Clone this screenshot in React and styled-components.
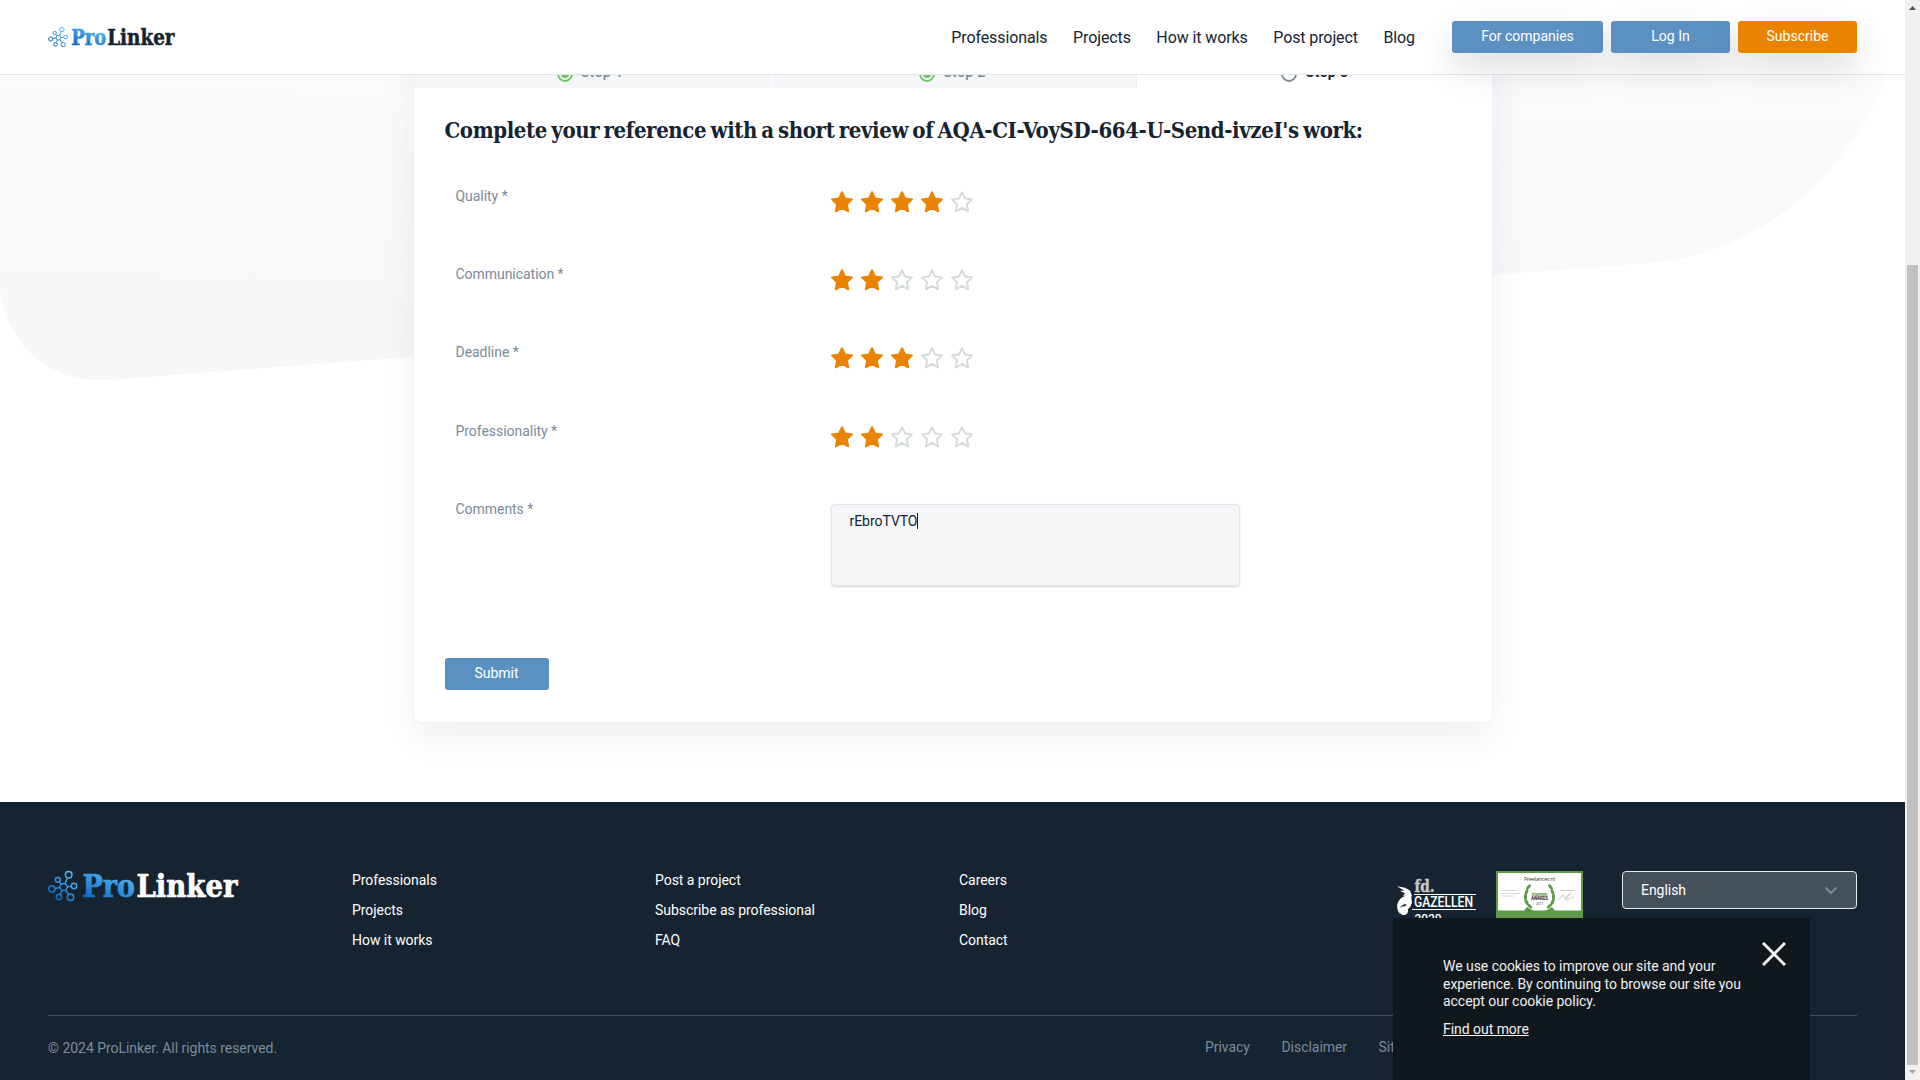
import React from 'react';
import styled, { createGlobalStyle } from 'styled-components';

const Global = createGlobalStyle`
  * { box-sizing: border-box; }
  html, body { margin: 0; height: 1080px; overflow: hidden; background: #fff; }
  body { font-family: Roboto, "Liberation Sans", sans-serif; font-size: 14px; letter-spacing: -0.04px; color: #152430; }
`;

const Window = styled.div`
  display: flex;
  width: 1920px;
  height: 1080px;
  overflow: hidden;
`;

const Page = styled.div`
  position: relative;
  width: 1905px;
  height: 1080px;
  display: flex;
  flex-direction: column;
  overflow: hidden;
`;

const Backdrop = styled.svg`
  position: absolute;
  left: 0;
  top: 0;
`;

const Header = styled.header`
  position: relative;
  z-index: 3;
  flex: none;
  height: 75px;
  padding: 0 48px;
  display: flex;
  align-items: center;
  background: #fff;
  border-bottom: 1px solid #e2e6ea;
`;

const Nav = styled.nav`
  display: flex;
  gap: 25.5px;
  margin-left: auto;
  margin-right: 37px;
  padding-top: 1px;
`;

const NavLink = styled.a`
  font-size: 16px;
  line-height: 24px;
  letter-spacing: -0.1px;
  white-space: nowrap;
`;

const Actions = styled.div`
  display: flex;
  gap: 8px;
`;

const Button = styled.button`
  width: ${(p) => p.$width}px;
  height: 32px;
  padding: 0 0 2px;
  border: 0;
  border-radius: 3px;
  font: inherit;
  color: #fff;
  background: ${(p) => (p.$accent ? '#e98300' : '#5b91c2')};
  box-shadow: ${(p) => (p.$raised ? '0 15px 35px rgba(0, 0, 0, 0.14)' : 'none')};
`;

const Main = styled.main`
  position: relative;
  flex: none;
  height: 774px;
  margin-top: -47px;
  display: flex;
  flex-direction: column;
  align-items: center;
`;

const Card = styled.section`
  width: 1080px;
  height: 695px;
  display: flex;
  flex-direction: column;
  background: #fff;
  border: 1px solid #f0effb;
  border-top: 0;
  border-radius: 0 0 8px 8px;
  box-shadow: 0 15px 35px rgba(0, 0, 0, 0.06);
`;

const Tabs = styled.div`
  flex: none;
  height: 60px;
  margin: 0 -1px;
  display: grid;
  grid-template-columns: 356px 5px 363px 1fr;
`;

const Tab = styled.div`
  display: flex;
  align-items: flex-end;
  justify-content: center;
  gap: 8px;
  padding: 0 ${(p) => p.$shift || 0}px 6px ${(p) => (p.$active ? 2 : 0)}px;
  line-height: 16px;
  letter-spacing: 0.45px;
  font-weight: ${(p) => (p.$active ? 700 : 500)};
  color: ${(p) => (p.$active ? '#152430' : '#7b8b99')};
  background: ${(p) => (p.$active ? '#fff' : '#f5f6f8')};
  border-right: 1px solid #f0effb;
`;

const TabLabel = styled.span`
  margin-bottom: 2px;
`;

const TabGap = styled.div`
  background: #f8f9fa;
`;

const StepIcon = styled.svg`
  flex: none;
  width: 16px;
  height: 16px;
`;

const Body = styled.div`
  padding: 30px 31px 0;
`;

const Title = styled.h1`
  margin: 0 0 44px;
  font-family: "Roboto Slab", "DejaVu Serif Condensed", "DejaVu Serif", serif;
  font-stretch: condensed;
  font-size: 22px;
  font-weight: 700;
  line-height: 24px;
  letter-spacing: -0.39px;
  word-spacing: -2.2px;
  white-space: nowrap;
`;

const Row = styled.div`
  display: grid;
  grid-template-columns: 375px 1fr;
  height: ${(p) => p.$height}px;
  padding-left: 11px;
`;

const Label = styled.label`
  line-height: 20px;
  color: #7b8b99;
`;

const Stars = styled.div`
  display: flex;
  gap: 8px;
  padding-top: 5px;
`;

const Star = styled.svg`
  width: 22px;
  height: 22px;
`;

const Comment = styled.div`
  width: 409px;
  height: 82px;
  margin-top: 5px;
  padding: 6px 18px;
  display: flex;
  line-height: 20px;
  background: #f5f7f9;
  border: 1px solid #e2e6ea;
  border-radius: 4px;
  box-shadow: 0 1px 2px rgba(0, 0, 0, 0.15);
`;

const Caret = styled.span`
  width: 1px;
  height: 16px;
  margin-top: 2px;
  background: #152430;
`;

const SubmitRow = styled.div`
  margin-top: 56px;
`;

const Footer = styled.footer`
  flex: none;
  height: 278px;
  padding: 69px 48px 0;
  color: #fff;
  background: #152430;
`;

const FooterTop = styled.div`
  display: grid;
  grid-template-columns: 304px 303px 304px 437px 100px 126px 235px;
  height: 145px;
  border-bottom: 1px solid #41505f;
`;

const LinkList = styled.div`
  display: flex;
  flex-direction: column;
  gap: 14px;
  padding-top: 1px;
`;

const FooterLink = styled.a`
  line-height: 16px;
`;

const Language = styled.div`
  display: flex;
  align-items: center;
  justify-content: space-between;
  height: 38px;
  padding: 0 18px;
  background: #44505a;
  border: 1px solid #e6e8ea;
  border-radius: 4px;
`;

const Legal = styled.div`
  display: flex;
  padding-top: 23px;
  line-height: 16px;
  color: #7b8b99;
`;

const Copyright = styled.span`
  width: 1157px;
  padding-top: 1px;
`;

const LegalLink = styled.a`
  margin-right: 31.5px;
`;

const Cookie = styled.aside`
  position: absolute;
  z-index: 4;
  right: 95px;
  bottom: 0;
  width: 417px;
  height: 162px;
  padding: 40px 50px;
  line-height: 17.5px;
  color: #f1f1f1;
  background: #10171d;
`;

const CookieText = styled.p`
  margin: 0 0 10px;
  white-space: nowrap;
`;

const CookieLink = styled.a`
  text-decoration: underline;
`;

const Close = styled.svg`
  position: absolute;
  right: 24px;
  top: 24px;
`;

const Scrollbar = styled.div`
  width: 15px;
  height: 1080px;
  padding: 6px 0 5px;
  display: flex;
  flex-direction: column;
  align-items: center;
  background: #f1f1f1;
`;

const Thumb = styled.div`
  width: 11px;
  height: 800px;
  margin: 255px 0 5px;
  background: #c1c1c1;
`;

const ScrollArrow = styled.svg`
  flex: none;
  width: 7px;
  height: 4px;
`;

const SLAB = '"Roboto Slab", "DejaVu Serif Condensed", "DejaVu Serif", serif';
const NODES = [[20.7, 3.8, 3.3], [9.8, 8.8, 2.4], [3.8, 18, 3.2], [11, 26, 2.7], [22.5, 26.3, 3.2], [26, 15, 2.7]];

function Logo({ width, height, ink, id }) {
  return (
    <svg width={width} height={height} viewBox="0 0 190 30" overflow="visible">
      <defs>
        <linearGradient id={id} x1="0" y1="1" x2="0.5" y2="0">
          <stop offset="0.15" stopColor="#0868c8" />
          <stop offset="1" stopColor="#58b8f4" />
        </linearGradient>
        <linearGradient id={`${id}m`} gradientUnits="userSpaceOnUse" x1="4" y1="27" x2="24" y2="4">
          <stop offset="0.1" stopColor="#0a6cca" />
          <stop offset="1" stopColor="#58b8f4" />
        </linearGradient>
      </defs>
      <g fill="none" stroke={`url(#${id}m)`} strokeWidth="1.5">
        <circle cx="15.5" cy="16" r="3.6" />
        {NODES.map(([x, y, r]) => {
          const dx = x - 15.5;
          const dy = y - 16;
          const d = Math.hypot(dx, dy);
          return (
            <g key={x}>
              <circle cx={x} cy={y} r={r} />
              <path d={`M${15.5 + (dx / d) * 3.6} ${16 + (dy / d) * 3.6}L${x - (dx / d) * r} ${y - (dy / d) * r}`} />
            </g>
          );
        })}
      </g>
      <g fontFamily={SLAB} fontWeight="700" fontSize="32" strokeWidth="0.7" letterSpacing="0">
        <text x="34.5" y="26.3" textLength="52.5" lengthAdjust="spacingAndGlyphs" fill={`url(#${id})`} stroke={`url(#${id})`}>Pro</text>
        <text x="88.5" y="26.3" textLength="101" lengthAdjust="spacingAndGlyphs" fill={ink} stroke={ink}>Linker</text>
      </g>
    </svg>
  );
}

function Rating({ value }) {
  return (
    <Stars>
      {[1, 2, 3, 4, 5].map((n) => (
        <Star key={n} viewBox="0 0 22 22">
          <path
            d="M11 1.2l3 6.300 7 .9-5.100 4.800 1.300 7.100L11 16.900l-6.200 3.400 1.300-7.100L1 8.400l7-.9z"
            fill={n <= value ? '#e98300' : '#fff'}
            stroke={n <= value ? '#e98300' : '#d5dade'}
            strokeWidth="1.9"
            strokeLinejoin="round"
          />
        </Star>
      ))}
    </Stars>
  );
}

function StepDot({ done }) {
  const color = done ? '#6fc466' : '#7b8b99';
  return (
    <StepIcon viewBox="0 0 16 16">
      <circle cx="8" cy="8" r="7" fill="none" stroke={color} strokeWidth="1.8" />
      {done && <circle cx="8" cy="8" r="4" fill={color} />}
    </StepIcon>
  );
}

function Gazellen() {
  return (
    <svg width="82" height="58" viewBox="0 0 82 58">
      <text x="18.5" y="20.7" fontFamily={SLAB} fontWeight="700" fontSize="16" textLength="20" lengthAdjust="spacingAndGlyphs" fill="#c4c6c8" stroke="#c4c6c8" strokeWidth="0.4">fd.</text>
      <path d="M18 23.5h62M16 38.5h64" stroke="#fff" strokeWidth="1.2" />
      <text x="18" y="36" fontFamily="Roboto, sans-serif" fontWeight="500" fontSize="14" textLength="59" lengthAdjust="spacingAndGlyphs" fill="#fff">GAZELLEN</text>
      <text x="18.5" y="51.5" fontFamily="Roboto, sans-serif" fontWeight="500" fontSize="13.5" textLength="27" lengthAdjust="spacingAndGlyphs" fill="#fff">2020</text>
      <g fill="#fff">
        <path d="M1 15.3l8 1.500 5 2.700 2 5.500-2 1.500-3-1.500-4-.5 2-2.200-5-2.300 4-.5z" />
        <path d="M11 24.5C2 26-2 36 4 43c-1-6 1-9 5-10l5 2.500 2-3.500-1-8z" />
        <path d="M9 34.5l6-1c0 3-3 3.500-3.500 6z" />
        <circle cx="7.7" cy="39.7" r="4.4" />
      </g>
    </svg>
  );
}

function Award() {
  const leaves = [[-13, -4, 20], [-14, 1, 0], [-13, 6, -25], [-10, 10, -45], [-11, -9, 40]];
  return (
    <svg width="87" height="58" viewBox="0 0 87 58">
      <rect width="87" height="58" fill="#5c9a48" />
      <rect x="2" y="2" width="83" height="37.5" fill="#fff" />
      <text x="28" y="9.5" fontFamily="Open Sans, sans-serif" fontSize="6" textLength="31" fill="#444">Freelancer.nl</text>
      <path d="M6 19.5h14M6 22.5h18M6 25h12" stroke="#c9c9c9" strokeWidth="0.8" />
      <path d="M64 19.5h14M62 29l5-5 2 3 6-5-6 7 9-3" stroke="#aaa" fill="none" strokeWidth="0.6" />
      <path d="M31 36c8 6 17 6 25 0l3 4H28z" fill="#5c9a48" />
      {leaves.map(([x, y, r]) => (
        <g key={y} fill="#5c9a48">
          <ellipse cx={43.5 + x} cy={25 + y} rx="1.5" ry="3.2" transform={`rotate(${r} ${43.5 + x} ${25 + y})`} />
          <ellipse cx={43.5 - x} cy={25 + y} rx="1.5" ry="3.2" transform={`rotate(${-r} ${43.5 - x} ${25 + y})`} />
        </g>
      ))}
      <text x="35.5" y="25" fontFamily="Roboto, sans-serif" fontWeight="700" fontSize="4" textLength="16" fill="#5c9a48">STARTERS</text>
      <text x="35" y="29.3" fontFamily="Roboto, sans-serif" fontWeight="700" fontSize="4.5" textLength="17" fill="#333">AWARDS</text>
      <text x="40" y="34" fontFamily="Roboto, sans-serif" fontSize="3" textLength="7" fill="#333">2017</text>
    </svg>
  );
}

const LINKS = [
  ['Professionals', 'Projects', 'How it works'],
  ['Post a project', 'Subscribe as professional', 'FAQ'],
  ['Careers', 'Blog', 'Contact'],
];
const RATINGS = [['Quality *', 4, 78], ['Communication *', 2, 78], ['Deadline *', 3, 79], ['Professionality *', 2, 78]];

export default function App() {
  return (
    <Window>
      <Global />
      <Page>
        <Backdrop width="1905" height="400" viewBox="0 0 1905 400">
          <defs>
            <linearGradient id="wash" x1="0.55" y1="0" x2="0.45" y2="1">
              <stop offset="0.15" stopColor="#fafbfc" />
              <stop offset="1" stopColor="#f5f7f9" />
            </linearGradient>
          </defs>
          <path d="M0 0H1905C1889 70 1889 70 1887 76C1845 180 1760 252 1650 263L107 380C45 384 0 335 0 283Z" fill="url(#wash)" />
        </Backdrop>
        <Header>
          <Logo width={127} height={20} ink="#152430" id="head" />
          <Nav>
            {['Professionals', 'Projects', 'How it works', 'Post project', 'Blog'].map((t) => <NavLink key={t}>{t}</NavLink>)}
          </Nav>
          <Actions>
            <Button $width={151} $raised>For companies</Button>
            <Button $width={119} $raised>Log In</Button>
            <Button $width={119} $raised $accent>Subscribe</Button>
          </Actions>
        </Header>
        <Main>
          <Card>
            <Tabs>
              <Tab><StepDot done /><TabLabel>Step 1</TabLabel></Tab>
              <TabGap />
              <Tab $shift={4}><StepDot done /><TabLabel>Step 2</TabLabel></Tab>
              <Tab $active><StepDot /><TabLabel>Step 3</TabLabel></Tab>
            </Tabs>
            <Body>
              <Title>Complete your reference with a short review of AQA-CI-VoySD-664-U-Send-ivzeI's work:</Title>
              {RATINGS.map(([name, value, height]) => (
                <Row key={name} $height={height}>
                  <Label>{name}</Label>
                  <Rating value={value} />
                </Row>
              ))}
              <Row $height={103}>
                <Label>Comments *</Label>
                <Comment>rEbroTVTO<Caret /></Comment>
              </Row>
              <SubmitRow><Button $width={104}>Submit</Button></SubmitRow>
            </Body>
          </Card>
        </Main>
        <Footer>
          <FooterTop>
            <Logo width={190} height={30} ink="#fff" id="foot" />
            {LINKS.map((col) => (
              <LinkList key={col[0]}>{col.map((t) => <FooterLink key={t}>{t}</FooterLink>)}</LinkList>
            ))}
            <Gazellen />
            <Award />
            <Language>
              English
              <svg width="14" height="9" viewBox="0 0 14 9"><path d="M1.5 1.5L7 7l5.500-5.500" fill="none" stroke="#7b8b99" strokeWidth="2" /></svg>
            </Language>
          </FooterTop>
          <Legal>
            <Copyright>© 2024 ProLinker. All rights reserved.</Copyright>
            <LegalLink>Privacy</LegalLink>
            <LegalLink>Disclaimer</LegalLink>
            <LegalLink>Sitemap</LegalLink>
          </Legal>
        </Footer>
        <Cookie>
          <CookieText>
            We use cookies to improve our site and your<br />experience. By continuing to browse our site you<br />accept our cookie policy.
          </CookieText>
          <CookieLink>Find out more</CookieLink>
          <Close width="24" height="24" viewBox="0 0 24 24"><path d="M1 1l22 22M23 1L1 23" stroke="#f1f1f1" strokeWidth="3" /></Close>
        </Cookie>
      </Page>
      <Scrollbar>
        <ScrollArrow viewBox="0 0 7 4"><path d="M0 4L3.5 0 7 4z" fill="#505050" /></ScrollArrow>
        <Thumb />
        <ScrollArrow viewBox="0 0 7 4"><path d="M0 0L3.5 4 7 0z" fill="#a3a3a3" /></ScrollArrow>
      </Scrollbar>
    </Window>
  );
}
